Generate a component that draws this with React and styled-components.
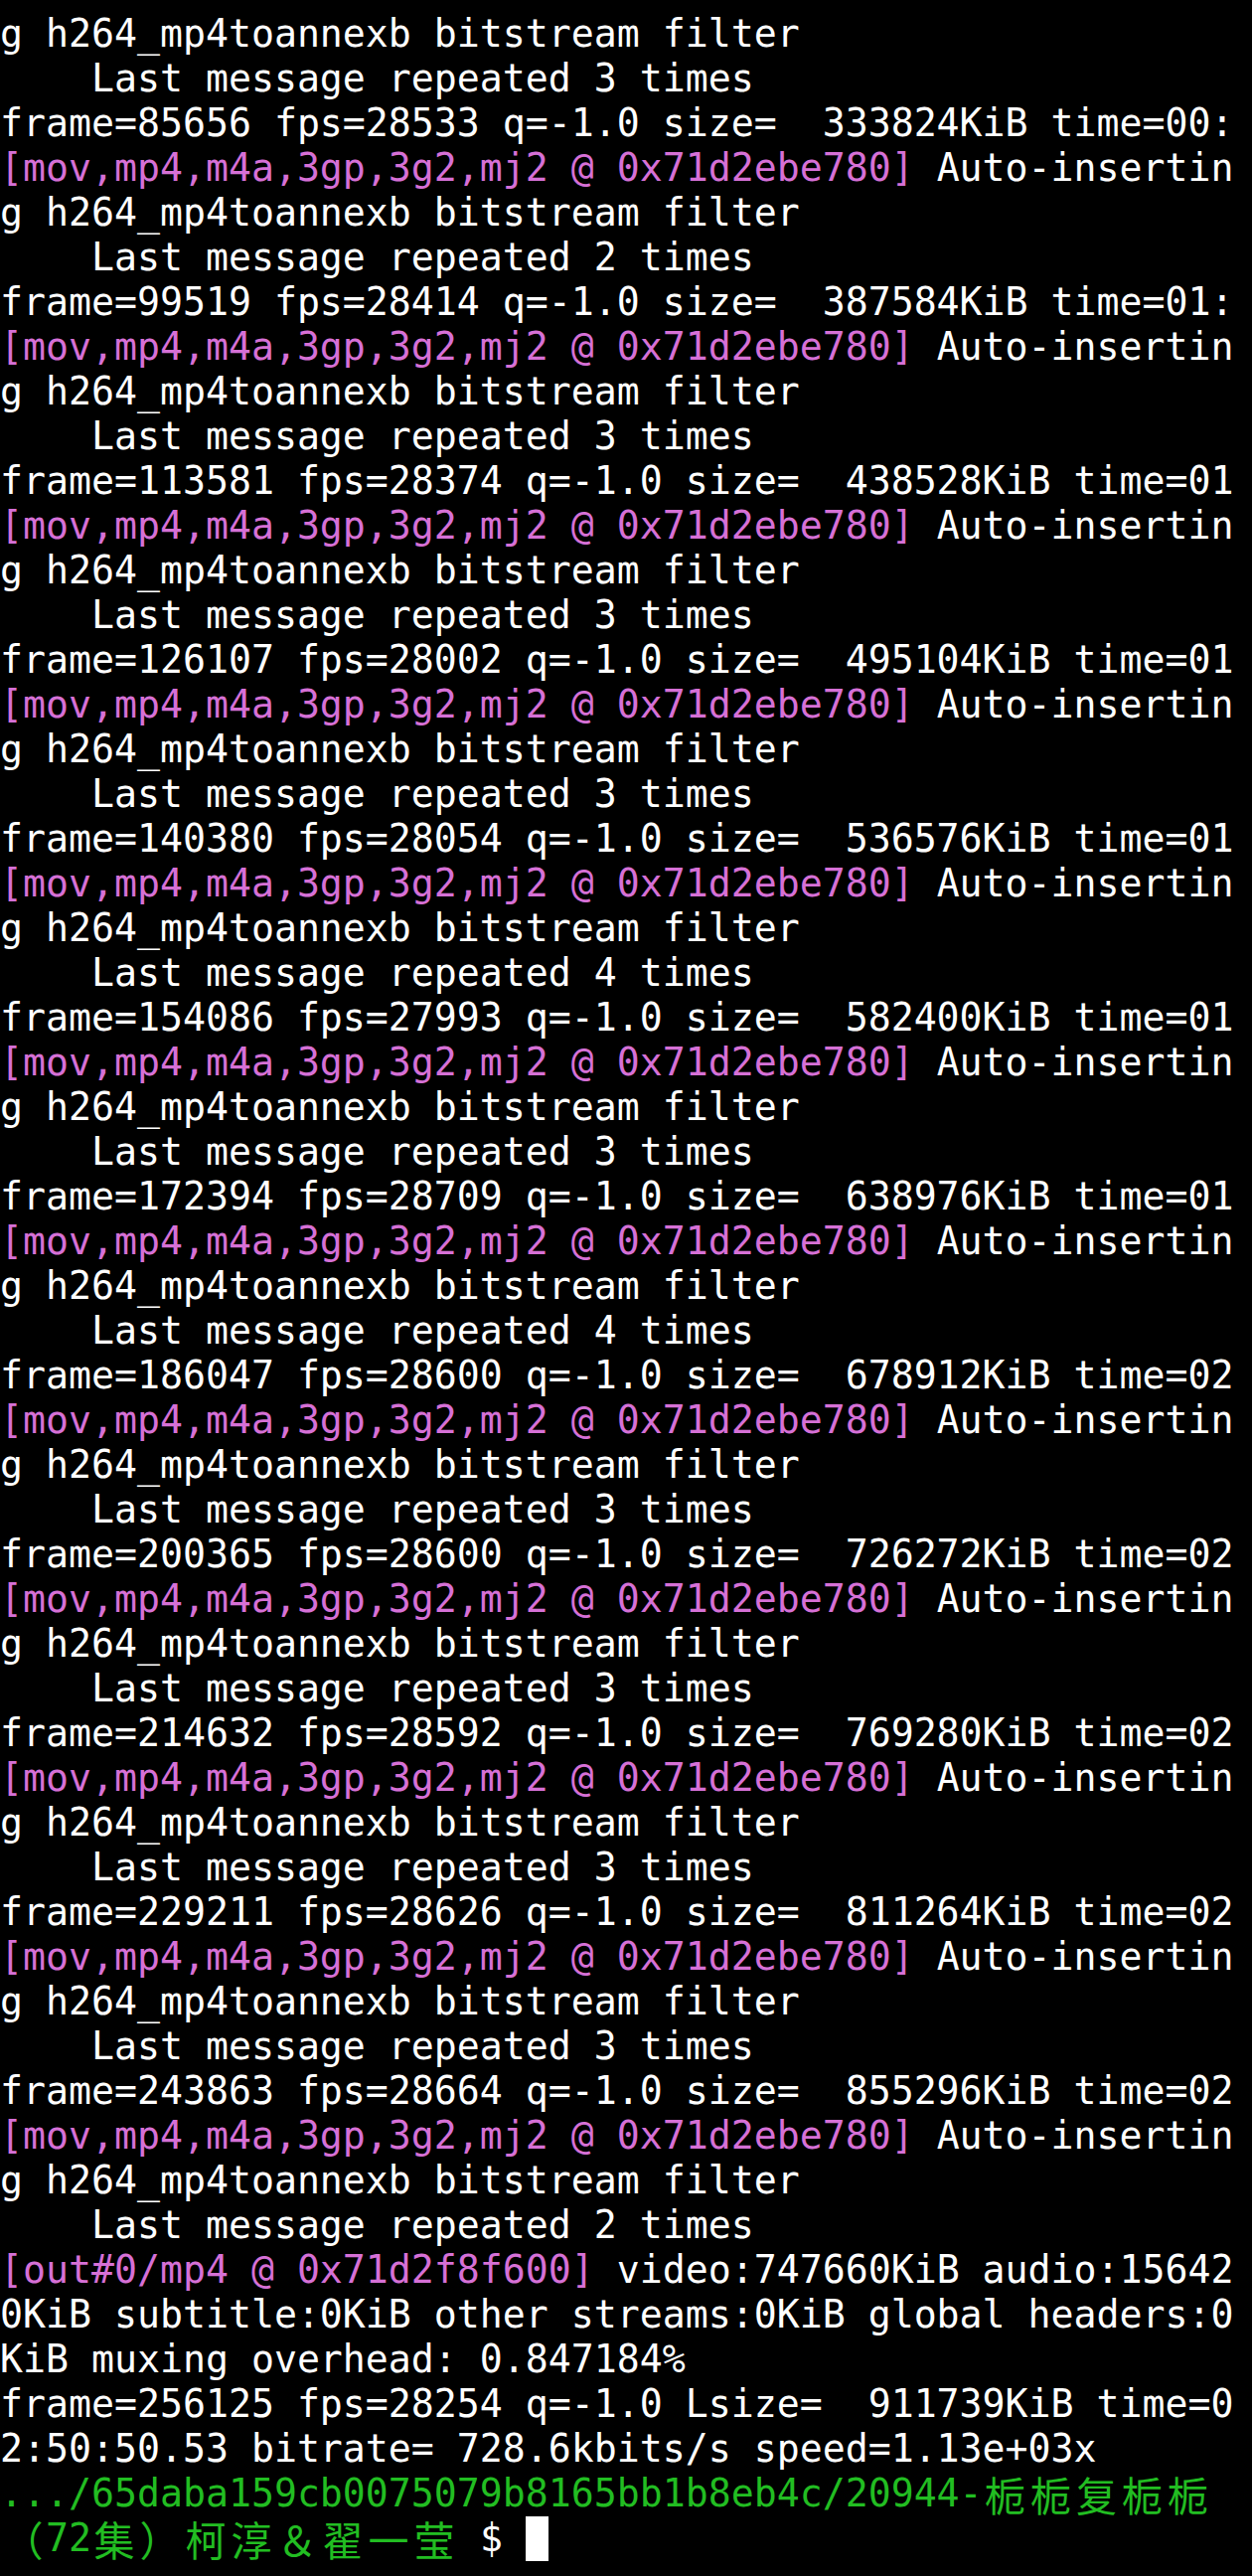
import React from "react";
import styled, { createGlobalStyle } from "styled-components";

const Global = createGlobalStyle`
  html, body {
    margin: 0;
    padding: 0;
    background: #000;
  }
  #root {
    min-height: 2592px;
    background: #000;
  }
`;

const Terminal = styled.div`
  box-sizing: border-box;
  width: 1260px;
  min-height: 2592px;
  padding-top: 12px;
  background: #000;
  color: #ffffff;
  font-family: "DejaVu Sans Mono", "Liberation Mono", "Noto Sans CJK SC", monospace;
  font-size: 38.2px;
`;

const Line = styled.div`
  height: 45px;
  line-height: 45px;
  white-space: pre;
  color: ${(p) => (p.$tone === "green" ? "#22bd22" : "#ffffff")};
`;

const Tag = styled.span`
  color: ${(p) => (p.$tone === "green" ? "#22bd22" : p.$tone === "white" ? "#ffffff" : "#d670d6")};
`;

const Wide = styled.span`
  display: inline-block;
  width: 46px;
  height: 45px;
  line-height: 45px;
  text-align: center;
  vertical-align: top;
  font-family: "Noto Sans CJK SC", sans-serif;
  font-size: 41px;
`;

const Cursor = styled.span`
  display: inline-block;
  width: 23px;
  height: 45px;
  vertical-align: top;
  background: #ffffff;
`;

function cells(text) {
  const out = [];
  let buf = "";
  let k = 0;
  for (const ch of text) {
    const c = ch.codePointAt(0);
    if (c >= 0x2e80) {
      if (buf) {
        out.push(buf);
        buf = "";
      }
      out.push(<Wide key={"w" + k++}>{ch}</Wide>);
    } else {
      buf += ch;
    }
  }
  if (buf) out.push(buf);
  return out;
}

const MOV = "[mov,mp4,m4a,3gp,3g2,mj2 @ 0x71d2ebe780]";
const FILTER = "g h264_mp4toannexb bitstream filter";
const rep = (n) => `    Last message repeated ${n} times`;

const groups = [
  ["85656", "28533", "333824", "00:", 2],
  ["99519", "28414", "387584", "01:", 3],
  ["113581", "28374", "438528", "01", 3],
  ["126107", "28002", "495104", "01", 3],
  ["140380", "28054", "536576", "01", 4],
  ["154086", "27993", "582400", "01", 3],
  ["172394", "28709", "638976", "01", 4],
  ["186047", "28600", "678912", "02", 3],
  ["200365", "28600", "726272", "02", 3],
  ["214632", "28592", "769280", "02", 3],
  ["229211", "28626", "811264", "02", 3],
  ["243863", "28664", "855296", "02", 2],
];

export default function App() {
  const lines = [];
  let i = 0;
  lines.push(<Line key={i++}>{FILTER}</Line>);
  lines.push(<Line key={i++}>{rep(3)}</Line>);
  groups.forEach(([f, fps, size, t, n]) => {
    lines.push(
      <Line key={i++}>{`frame=${f} fps=${fps} q=-1.0 size=  ${size}KiB time=${t}`}</Line>
    );
    lines.push(
      <Line key={i++}>
        <Tag>{MOV}</Tag>
        {" Auto-insertin"}
      </Line>
    );
    lines.push(<Line key={i++}>{FILTER}</Line>);
    lines.push(<Line key={i++}>{rep(n)}</Line>);
  });

  return (
    <>
      <Global />
      <Terminal>
        {lines}
        <Line>
          <Tag>[out#0/mp4 @ 0x71d2f8f600]</Tag>
          {" video:747660KiB audio:15642"}
        </Line>
        <Line>0KiB subtitle:0KiB other streams:0KiB global headers:0</Line>
        <Line>KiB muxing overhead: 0.847184%</Line>
        <Line>frame=256125 fps=28254 q=-1.0 Lsize=  911739KiB time=0</Line>
        <Line>2:50:50.53 bitrate= 728.6kbits/s speed=1.13e+03x</Line>
        <Line $tone="green">
          {cells(".../65daba159cb0075079b8165bb1b8eb4c/20944-栀栀复栀栀")}
        </Line>
        <Line $tone="green">
          {cells("（72集）柯淳＆翟一莹")}
          <Tag $tone="white">{" $ "}</Tag>
          <Cursor />
        </Line>
      </Terminal>
    </>
  );
}
